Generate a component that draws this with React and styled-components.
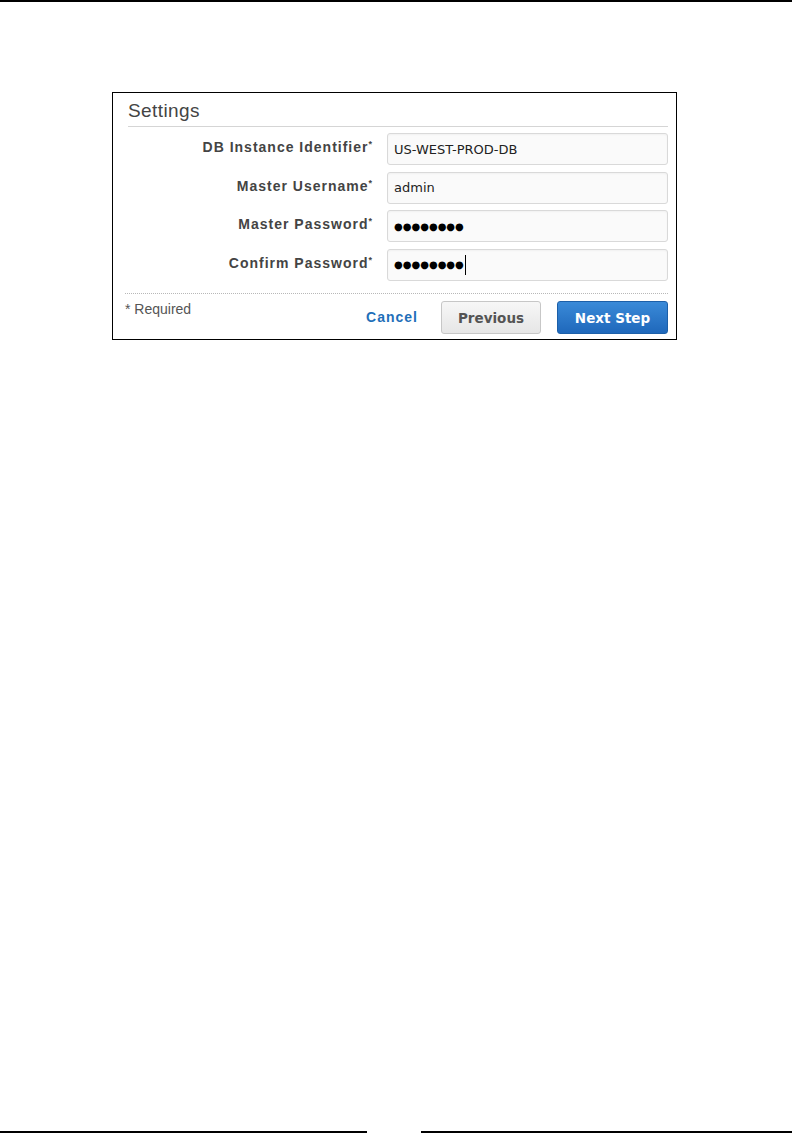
import React from 'react';
import styled, { createGlobalStyle } from 'styled-components';

const GlobalStyle = createGlobalStyle`
  body {
    margin: 0;
    background: #ffffff;
    font-family: "Liberation Sans", Arial, sans-serif;
  }
`;

const Page = styled.div`
  min-height: 1142px;
  display: flex;
  flex-direction: column;
  border-top: 2px solid #000;
  box-sizing: border-box;
`;

const Main = styled.main`
  flex: 1;
  padding: 90px 0 0 112px;
`;

const Panel = styled.section`
  width: 565px;
  height: 248px;
  box-sizing: border-box;
  border: 1px solid #000;
  display: flex;
  flex-direction: column;
`;

const Header = styled.header`
  margin: 0 8px 0 15px;
  padding: 7px 0 5px 0;
  border-bottom: 1px solid #d5d5d5;
`;

const Title = styled.h2`
  margin: 0;
  font-size: 19px;
  font-weight: normal;
  line-height: 21px;
  letter-spacing: 0.4px;
  color: #444;
`;

const Fields = styled.div`
  display: flex;
  flex-direction: column;
  gap: 6.6px;
  padding: 6px 8px 0 0;
`;

const FormRow = styled.div`
  display: grid;
  grid-template-columns: 259px 281px;
  column-gap: 15px;
`;

const Label = styled.label`
  text-align: right;
  font-size: 14px;
  font-weight: bold;
  letter-spacing: 1px;
  color: #444;
  padding-top: 6px;

  sup {
    font-size: 9px;
    letter-spacing: 0;
    vertical-align: 5px;
  }
`;

const Input = styled.div`
  height: 32px;
  box-sizing: border-box;
  border: 1px solid #d9d9d9;
  border-radius: 3px;
  background: #fafafa;
  box-shadow: inset 0 1px 2px rgba(0, 0, 0, 0.04);
  padding: 0 6px;
  display: flex;
  align-items: center;
  font-family: "DejaVu Sans", Verdana, sans-serif;
  font-size: 13px;
  color: #222;
`;

const Dots = styled.span`
  font-size: 10px;
  color: #000;
`;

const Caret = styled.span`
  display: inline-block;
  width: 1px;
  height: 20px;
  background: #000;
  margin-left: 1px;
`;

const Footer = styled.footer`
  margin: 12px 8px 0 12px;
  border-top: 1px dotted #b8b8b8;
  padding-top: 7px;
  display: flex;
  align-items: flex-start;
`;

const Required = styled.span`
  font-size: 14px;
  color: #555;
  flex: 1;
`;

const CancelLink = styled.a`
  font-size: 14px;
  font-weight: bold;
  letter-spacing: 1px;
  color: #1f6fb9;
  margin-top: 8px;
  margin-right: 23px;
  cursor: pointer;
`;

const Button = styled.button`
  height: 33px;
  box-sizing: border-box;
  border-radius: 3px;
  font-family: "DejaVu Sans", Verdana, sans-serif;
  font-size: 13.5px;
  font-weight: bold;
  cursor: pointer;
  padding: 2px 0 0;
  width: ${(p) => p.$width}px;
  margin-left: ${(p) => p.$gap}px;
  color: ${(p) => (p.$primary ? '#fff' : '#545454')};
  border: 1px solid ${(p) => (p.$primary ? '#1c5fa8' : '#c7c7c7')};
  background: ${(p) =>
    p.$primary
      ? 'linear-gradient(#3a8ad8, #1f68bb)'
      : 'linear-gradient(#f7f7f7, #e6e6e6)'};
`;

const BottomRule = styled.div`
  height: 2px;
  display: flex;
  justify-content: space-between;
  margin-bottom: 9px;
`;

const RuleSegment = styled.span`
  width: ${(p) => p.$width}px;
  background: #000;
`;

const fields = [
  { label: 'DB Instance Identifier', value: 'US-WEST-PROD-DB' },
  { label: 'Master Username', value: 'admin' },
  { label: 'Master Password', secret: true },
  { label: 'Confirm Password', secret: true, focused: true },
];

export default function App() {
  return (
    <>
      <GlobalStyle />
      <Page>
        <Main>
          <Panel>
            <Header>
              <Title>Settings</Title>
            </Header>
            <Fields>
              {fields.map((f) => (
                <FormRow key={f.label}>
                  <Label>
                    {f.label}
                    <sup>*</sup>
                  </Label>
                  <Input>
                    {f.secret ? <Dots>●●●●●●●●</Dots> : f.value}
                    {f.focused && <Caret />}
                  </Input>
                </FormRow>
              ))}
            </Fields>
            <Footer>
              <Required>* Required</Required>
              <CancelLink>Cancel</CancelLink>
              <Button $width={100} $gap={0}>Previous</Button>
              <Button $primary $width={111} $gap={16}>Next Step</Button>
            </Footer>
          </Panel>
        </Main>
        <BottomRule>
          <RuleSegment $width={367} />
          <RuleSegment $width={371} />
        </BottomRule>
      </Page>
    </>
  );
}
